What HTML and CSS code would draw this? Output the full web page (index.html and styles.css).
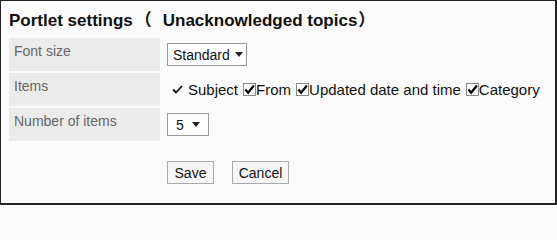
FILE: index.html
```html
<!DOCTYPE html>
<html>
<head>
<meta charset="utf-8">
<link rel="stylesheet" href="styles.css">
</head>
<body>
<div class="frame">
  <h1 class="title">Portlet settings<span class="paren-open">（</span>Unacknowledged topics<span class="paren-close">）</span></h1>
  <div class="form">
    <div class="row">
      <div class="label">Font size</div>
      <div class="value">
        <span class="select select-wide">Standard<span class="arrow"></span></span>
      </div>
    </div>
    <div class="row">
      <div class="label">Items</div>
      <div class="value items">
        <span class="tick"><svg width="11" height="9" viewBox="0 0 11 9"><path d="M1 4.5 L4 7.5 L10 1" fill="none" stroke="#111" stroke-width="1.8"/></svg></span><span class="item-text">Subject</span>
        <span class="cb"><svg width="12" height="11" viewBox="0 0 12 11"><path d="M1.5 5.5 L4.5 9 L10.8 1.2" fill="none" stroke="#000" stroke-width="2.4"/></svg></span><span class="item-text">From</span>
        <span class="cb"><svg width="12" height="11" viewBox="0 0 12 11"><path d="M1.5 5.5 L4.5 9 L10.8 1.2" fill="none" stroke="#000" stroke-width="2.4"/></svg></span><span class="item-text">Updated date and time</span>
        <span class="cb"><svg width="12" height="11" viewBox="0 0 12 11"><path d="M1.5 5.5 L4.5 9 L10.8 1.2" fill="none" stroke="#000" stroke-width="2.4"/></svg></span><span class="item-text">Category</span>
      </div>
    </div>
    <div class="row">
      <div class="label">Number of items</div>
      <div class="value">
        <span class="select select-num">5<span class="arrow"></span></span>
      </div>
    </div>
  </div>
  <div class="buttons">
    <span class="btn btn-save">Save</span>
    <span class="btn btn-cancel">Cancel</span>
  </div>
</div>
</body>
</html>
```
FILE: styles.css
```css
html, body {
  margin: 0;
  padding: 0;
}
body {
  font-family: "Liberation Sans", Arial, "Noto Sans CJK JP", sans-serif;
  font-size: 14px;
  color: #111;
  background: #fbfbfb;
}
.frame {
  box-sizing: border-box;
  width: 557px;
  height: 205px;
  border: 1px solid #222;
  border-right-width: 2px;
  border-bottom-width: 2px;
  background: #fbfbfb;
  padding: 0 0 0 8px;
}
.title {
  margin: 0;
  padding-top: 10px;
  font-family: "Liberation Sans", Arial, "Noto Sans CJK JP", sans-serif;
  font-size: 17px;
  font-weight: bold;
  line-height: 20px;
  height: 27px;
  color: #111;
  white-space: nowrap;
}
.paren-open {
  margin-left: 2px;
  margin-right: 11px;
}
.paren-close {
  margin-left: 1px;
}
.form {
  display: flex;
  flex-direction: column;
  gap: 2px;
}
.row {
  display: flex;
  height: 33px;
}
.label {
  width: 146px;
  background: #ebebeb;
  color: #666;
  padding: 5px 0 0 5px;
  line-height: 16px;
}
.value {
  padding: 5px 0 0 7px;
  display: flex;
  align-items: flex-start;
}
.select {
  box-sizing: border-box;
  display: inline-flex;
  align-items: center;
  height: 23px;
  border: 1px solid #999;
  background: #fff;
  color: #111;
  padding: 0 0 0 5px;
  line-height: 16px;
}
.select-wide { width: 80px; }
.select-num { width: 42px; padding-left: 8px; }
.arrow {
  display: inline-block;
  width: 0;
  height: 0;
  border-left: 4px solid transparent;
  border-right: 4px solid transparent;
  border-top: 5px solid #222;
  margin-left: 5px;
}
.select-num .arrow { margin-left: 8px; }
.items {
  padding-top: 8px;
  align-items: center;
  height: 17px;
  font-size: 15px;
  line-height: 17px;
  white-space: nowrap;
}
.tick {
  display: inline-flex;
  margin: 0 5px 0 5px;
}
.item-text {
  margin-right: 5px;
}
.cb {
  box-sizing: border-box;
  display: inline-flex;
  align-items: center;
  justify-content: center;
  width: 13px;
  height: 13px;
  border: 1px solid #888;
  background: #fff;
}
.buttons {
  display: flex;
  gap: 18px;
  padding: 20px 0 0 158px;
}
.btn {
  box-sizing: border-box;
  display: inline-flex;
  align-items: center;
  justify-content: center;
  height: 23px;
  border: 1px solid #aaa;
  background: #f6f6f6;
  color: #111;
}
.btn-save { width: 47px; }
.btn-cancel { width: 57px; }
```
